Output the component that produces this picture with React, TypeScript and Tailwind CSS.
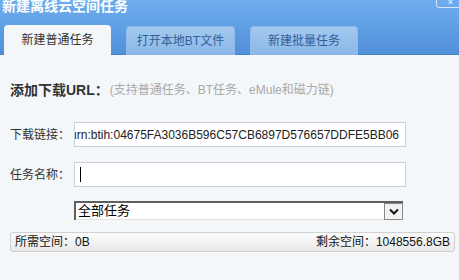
import React from "react";

const cjk = { fontFamily: '"Liberation Sans", "Noto Sans CJK SC", sans-serif' };

export default function App() {
  return (
    <div className="w-[459px] h-[280px] overflow-hidden bg-[#f4f7fa] flex flex-col" style={cjk}>
      {/* header */}
      <div className="relative h-[55px] bg-gradient-to-b from-[#6eaeee] to-[#5190da] border-b border-[#4a82c6] flex flex-col">
        <div className="h-[25px] flex items-start">
          <span className="text-white font-bold text-[14px] leading-[14px] ml-[2px] -mt-[1px]">新建离线云空间任务</span>
        </div>
        <div className="absolute right-[-6px] top-[-6px] w-[29px] h-[14px] rounded-[3px] border border-[#d8e8fa] flex items-end justify-center">
          <span className="text-white text-[9px] leading-[9px]">×</span>
        </div>
        <div className="flex items-end gap-[15px] pl-[4px] h-[30px] -mb-px">
          <div className="w-[107px] h-[30px] rounded-t-[4px] bg-[#f4f7fa] flex items-center justify-center text-[12px] text-[#333]">
            新建普通任务
          </div>
          <div className="w-[109px] h-[29px] rounded-t-[4px] bg-gradient-to-b from-[#a4c9ef] to-[#8ab6e6] border border-b-0 border-[#8fb9e6] flex items-center justify-center text-[12px] text-[#2f5f9c]">
            打开本地BT文件
          </div>
          <div className="w-[108px] h-[29px] rounded-t-[4px] bg-gradient-to-b from-[#a4c9ef] to-[#8ab6e6] border border-b-0 border-[#8fb9e6] flex items-center justify-center text-[12px] text-[#2f5f9c]">
            新建批量任务
          </div>
        </div>
      </div>

      {/* content */}
      <div className="flex flex-col pl-[10px] pr-[4px]">
        <div className="mt-[25px] h-[20px] flex items-center">
          <span className="font-bold text-[14px] text-[#333]">添加下载URL：</span>
          <span className="text-[12px] text-[#a8a8a8] ml-[1px]">(支持普通任务、BT任务、eMule和磁力链)</span>
        </div>

        <div className="mt-[22px] flex items-center">
          <span className="w-[64px] text-[12px] text-[#333]">下载链接：</span>
          <div className="w-[332px] h-[25px] bg-white border border-[#c9d0d8] flex items-center justify-end overflow-hidden pr-[6px]">
            <span className="whitespace-nowrap text-[12px] text-[#222]" style={{ fontFamily: '"Liberation Sans", sans-serif' }}>
              urn:btih:04675FA3036B596C57CB6897D576657DDFE5BB06
            </span>
          </div>
        </div>

        <div className="mt-[15px] flex items-center">
          <span className="w-[64px] text-[12px] text-[#333]">任务名称：</span>
          <div className="w-[332px] h-[25px] bg-white border border-[#c9d0d8] flex items-center pl-[5px]">
            <div className="w-px h-[15px] bg-black" />
          </div>
        </div>

        <div className="mt-[14px] ml-[64px] w-[329px] h-[19px] flex border-t-2 border-l-2 border-[#5f5f5f] bg-white">
          <div className="flex-1 flex items-center pl-[2px] text-[13px] text-black border-b border-[#e2e2e2]">全部任务</div>
          <div className="w-[19px] h-[17px] border border-[#888] bg-[#f2f2f2] flex items-center justify-center">
            <svg width="10" height="7" viewBox="0 0 10 7">
              <path d="M1 1.5 L5 5.5 L9 1.5" stroke="#111" strokeWidth="2" fill="none" />
            </svg>
          </div>
        </div>

        <div className="mt-[12px] w-[445px] h-[20px] rounded-[3px] border border-[#d0d0d0] bg-gradient-to-b from-[#fbfbfb] to-[#e9e9e9] flex items-center justify-between px-[4px] text-[12px] text-[#111]">
          <span>所需空间：0B</span>
          <span>剩余空间：1048556.8GB</span>
        </div>
      </div>
    </div>
  );
}
